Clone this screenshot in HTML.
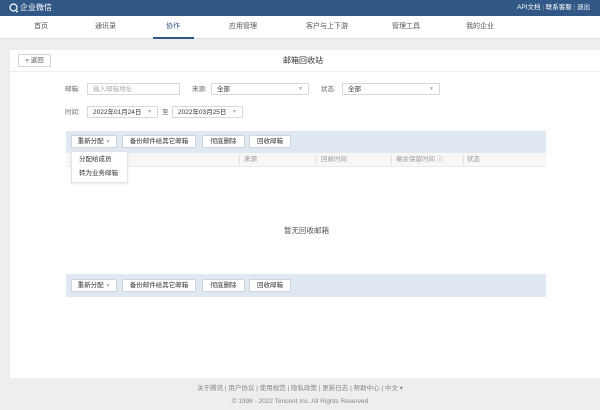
<!DOCTYPE html>
<html><head><meta charset="utf-8"><style>
*{margin:0;padding:0;box-sizing:border-box}
body{width:600px;height:410px;background:#eceef0;font-family:"Liberation Sans","Noto Sans CJK SC",sans-serif;font-size:7px;color:#333;position:relative;overflow:hidden;line-height:1.2}
.top{position:absolute;left:0;top:0;width:600px;height:16px;background:#315786;color:#fff}
.nav{position:absolute;left:0;top:16px;width:600px;height:23px;background:#fff;border-bottom:1px solid #dde1e6}
.nav span{position:absolute;top:7px;font-size:7px;color:#555}
.a{position:absolute}
.panel{position:absolute;left:10px;top:50px;width:590px;height:328px;background:#fff}
.inp{position:absolute;height:12px;border:1px solid #d5d8dc;background:#fff;font-size:6.5px;padding:2px 5px;line-height:7px}
.btn{position:absolute;height:13px;border:1px solid #d0d4d9;background:#fff;font-size:6.5px;line-height:11px;text-align:center;border-radius:1px}
.lbl{position:absolute;font-size:6.5px;color:#666;line-height:8px}
.arr{position:absolute;right:5px;top:2px;color:#aaa;font-size:5px}
</style></head><body>
<div class="top">
<svg class="a" style="left:9px;top:3px" width="10" height="10"><circle cx="4.5" cy="4.5" r="3.5" fill="none" stroke="#fff" stroke-width="1.2"/><circle cx="8" cy="8.5" r="1" fill="#fff"/></svg>
<span class="a" style="left:20px;top:3px;font-size:8px">企业微信</span>
<span class="a" style="left:517px;top:4px;font-size:6.5px">API文档 <span style="color:#8aa">|</span> 联系客服 <span style="color:#8aa">|</span> 退出</span>
</div>
<div class="nav">
<span style="left:34px">首页</span><span style="left:95px">通讯录</span><span style="left:166px;color:#315786">协作</span><span style="left:229px">应用管理</span><span style="left:306px">客户与上下游</span><span style="left:392px">管理工具</span><span style="left:466px">我的企业</span>
<div class="a" style="left:153px;top:21px;width:41px;height:2px;background:#315786"></div>
</div>
<div class="panel">
<div class="a" style="left:0;top:21px;width:590px;height:1px;background:#eee"></div>
<div class="btn" style="left:8px;top:4px;width:33px;color:#555">« 返回</div>
<div class="a" style="left:273px;top:6px;font-size:8px;color:#333">邮箱回收站</div>
<span class="lbl" style="left:55px;top:36px">邮箱:</span>
<div class="inp" style="left:77px;top:33px;width:93px;color:#aaa">输入邮箱地址</div>
<span class="lbl" style="left:182px;top:36px">来源:</span>
<div class="inp" style="left:201px;top:33px;width:98px">全部<span class="arr">▼</span></div>
<span class="lbl" style="left:311px;top:36px">状态:</span>
<div class="inp" style="left:332px;top:33px;width:98px">全部<span class="arr">▼</span></div>
<span class="lbl" style="left:55px;top:59px">时间:</span>
<div class="inp" style="left:77px;top:56px;width:71px">2022年01月24日<span class="arr">▼</span></div>
<span class="lbl" style="left:152px;top:59px">至</span>
<div class="inp" style="left:162px;top:56px;width:71px">2022年03月25日<span class="arr">▼</span></div>
<div class="a" style="left:56px;top:81px;width:480px;height:22px;background:#dfe8f3"></div>
<div class="btn" style="left:61px;top:85px;width:46px">重新分配 <span style="color:#aaa;font-size:5px">▼</span></div>
<div class="btn" style="left:112px;top:85px;width:74px">备份邮件给其它邮箱</div>
<div class="btn" style="left:192px;top:85px;width:43px">彻底删除</div>
<div class="btn" style="left:239px;top:85px;width:42px">回收邮箱</div>
<div class="a" style="left:56px;top:103px;width:480px;height:14px;background:#f7f7f7;border-bottom:1px solid #ebebeb"></div>
<div class="a" style="left:229px;top:105px;width:1px;height:10px;background:#e2e2e2"></div>
<div class="a" style="left:306px;top:105px;width:1px;height:10px;background:#e2e2e2"></div>
<div class="a" style="left:381px;top:105px;width:1px;height:10px;background:#e2e2e2"></div>
<div class="a" style="left:453px;top:105px;width:1px;height:10px;background:#e2e2e2"></div>
<span class="lbl" style="left:234px;top:106px;color:#999">来源</span>
<span class="lbl" style="left:311px;top:106px;color:#999">回收时间</span>
<span class="lbl" style="left:386px;top:106px;color:#999">剩余保留时间 ⓘ</span>
<span class="lbl" style="left:457px;top:106px;color:#999">状态</span>
<div class="a" style="left:61px;top:101px;width:57px;height:32px;background:#fff;border:1px solid #e3e3e3;box-shadow:0 1px 2px rgba(0,0,0,.1)"></div>
<span class="a" style="left:69px;top:106px;font-size:6.5px">分配给成员</span>
<span class="a" style="left:69px;top:120px;font-size:6.5px">转为业务邮箱</span>
<div class="a" style="left:274px;top:176px;font-size:7.5px;color:#555">暂无回收邮箱</div>
<div class="a" style="left:56px;top:224px;width:480px;height:23px;background:#dfe8f3"></div>
<div class="btn" style="left:61px;top:229px;width:46px">重新分配 <span style="color:#aaa;font-size:5px">▼</span></div>
<div class="btn" style="left:112px;top:229px;width:74px">备份邮件给其它邮箱</div>
<div class="btn" style="left:192px;top:229px;width:43px">彻底删除</div>
<div class="btn" style="left:239px;top:229px;width:42px">回收邮箱</div>
</div>
<div class="a" style="left:0;top:385px;width:600px;text-align:center;font-size:6.5px;color:#888">关于腾讯 | 用户协议 | 使用规范 | 隐私政策 | 更新日志 | 帮助中心 | 中文 ▾</div>
<div class="a" style="left:0;top:398px;width:600px;text-align:center;font-size:6.5px;color:#888">© 1998 - 2022 Tencent Inc. All Rights Reserved</div>
</body></html>
